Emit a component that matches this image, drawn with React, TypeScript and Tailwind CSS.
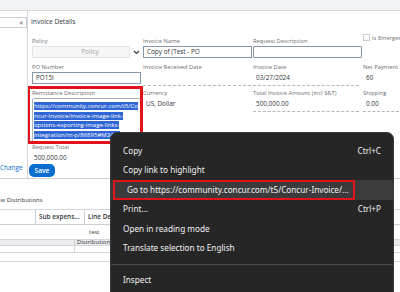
import React from "react";

const label = "text-[5.8px] leading-[8px] text-[#6a6d70] whitespace-nowrap";
const value = "text-[6.4px] text-[#32363a] whitespace-nowrap";

function Field({
  name,
  children,
}: {
  name: string;
  children?: React.ReactNode;
}) {
  return (
    <div className="flex flex-col">
      <div className={label}>{name}</div>
      {children}
    </div>
  );
}

function ReadValue({ text, dashed = true }: { text: string; dashed?: boolean }) {
  return (
    <div
      className={`mt-[1px] h-[14px] pl-[3px] pr-[3px] ${value} leading-[11px] ${
        dashed ? "border-b border-dashed border-[#b5b9bd]" : ""
      }`}
    >
      {text}
    </div>
  );
}

const menuItems: { text: string; key?: string; active?: boolean }[] = [
  { text: "Copy", key: "Ctrl+C" },
  { text: "Copy link to highlight" },
  { text: "Go to https://community.concur.com/t5/Concur-Invoice/...", active: true },
  { text: "Print...", key: "Ctrl+P" },
  { text: "Open in reading mode" },
  { text: "Translate selection to English" },
];

export default function App() {
  return (
    <div className="relative h-[292px] w-[400px] overflow-hidden bg-white font-['Open_Sans',sans-serif]">
      {/* top strip */}
      <div className="h-[11px] border-b border-[#d5d9de] bg-[#f1f3f5]" />

      <div className="flex h-[167px]">
        {/* left panel */}
        <div className="flex w-[28px] shrink-0 flex-col border-r border-[#d3d6da]">
          <div className="mt-[6px] flex h-[11px] items-center justify-end border border-l-0 border-[#c9ced4] pr-[3px] text-[7px] leading-none text-[#32363a]">
            «
          </div>
          <div className="mt-auto mb-[6px] text-[6.4px] leading-[9px] text-[#0a6ed1]">Change</div>
        </div>

        {/* main */}
        <div className="flex min-w-0 flex-1 flex-col overflow-hidden pl-[3px]">
          <div className="flex h-[22px] shrink-0 items-center text-[6.6px] text-[#32363a]">
            Invoice Details
          </div>

          <div className="grid grid-cols-[111px_110px_110px_36px] pl-[1px] pt-[4px]">
            {/* row 1 */}
            <Field name="Policy">
              <div className="mt-[1px] flex items-center">
                <div className="flex h-[12px] w-[98px] items-center justify-center border border-[#e3e5e8] bg-[#f7f7f7] pl-[18px] text-[6.6px] text-[#a3a7ab]">
                  Policy
                </div>
                <svg width="7" height="5" viewBox="0 0 7 5" className="ml-[3px]">
                  <path d="M1 1l2.5 2.5L6 1" stroke="#32363a" strokeWidth="1.1" fill="none" />
                </svg>
              </div>
            </Field>
            <Field name="Invoice Name">
              <div className={`mt-[1px] h-[12px] w-[109px] border border-[#8696a9] pl-[3px] ${value} leading-[10px]`}>
                Copy of (Test - PO
              </div>
            </Field>
            <Field name="Request Description">
              <div className="mt-[1px] h-[12px] w-[109px] rounded-[1px] border border-[#8696a9]" />
            </Field>
            <div className="-mt-[3px] flex items-start gap-[2px]">
              <div className="h-[7px] w-[7px] shrink-0 border border-[#c9ced4]" />
              <div className={label}>Is Emergency</div>
            </div>

            {/* row 2 */}
            <div className="pt-[5px]">
              <Field name="PO Number">
                <div className={`mt-[1px] h-[12px] w-[109px] border border-[#8696a9] pl-[3px] ${value} leading-[10px]`}>
                  PO15I
                </div>
              </Field>
            </div>
            <div className="pt-[5px] pr-[2px]">
              <Field name="Invoice Received Date">
                <ReadValue text="" />
              </Field>
            </div>
            <div className="pt-[5px] pr-[4px]">
              <Field name="Invoice Date">
                <ReadValue text="03/27/2024" />
              </Field>
            </div>
            <div className="pt-[5px]">
              <Field name="Net Payment Terms">
                <ReadValue text="60" dashed={false} />
              </Field>
            </div>

            {/* row 3 */}
            <div className="relative pt-[3px]">
              <div className="pointer-events-none absolute -left-[5px] top-[0px] h-[58px] w-[116px] border-[3px] border-[#e3131b]" />
              <Field name="Remittance Description">
                <div className="mt-[1px] h-[45px] w-[109px] overflow-hidden whitespace-nowrap rounded-[2px] border border-[#a9b4c0] px-[1px] pt-[3px] text-[6px] leading-[9.5px] text-white">
                  <span className="bg-[#2f66d6]">
                    https://community.concur.com/t5/Co
                    <br />
                    ncur-Invoice/invoice-image-link-
                    <br />
                    options-exporting-image-links-
                    <br />
                    integration/m-p/86895#M2420
                  </span>
                </div>
              </Field>
            </div>
            <div className="pt-[3px] pr-[2px]">
              <Field name="Currency">
                <ReadValue text="US, Dollar" dashed={false} />
              </Field>
            </div>
            <div className="pt-[3px] pr-[4px]">
              <Field name="Total Invoice Amount (incl S&T)">
                <ReadValue text="500,000.00" />
              </Field>
            </div>
            <div className="pt-[3px]">
              <Field name="Shipping">
                <ReadValue text="0.00" />
              </Field>
            </div>

            {/* row 4 */}
            <div>
              <Field name="Request Total">
                <div className={`pl-[2px] pt-[2px] ${value} leading-[9px] text-[#7a7d80]`}>500,000.00</div>
              </Field>
            </div>
          </div>

          <div className="mt-[2px] -ml-[2px] flex h-[13px] w-[26px] shrink-0 items-center justify-center rounded-[5px] bg-[#0a6ed1] text-[6.6px] font-semibold text-white">
            Save
          </div>
        </div>
      </div>

      {/* bottom section */}
      <div className="border-t border-[#cfd3d7] pt-[17px]">
        <div className="-ml-[8px] text-[6px] leading-[9px] text-[#32363a]">View Distributions</div>
        <div className="mt-[4px] border-t border-[#d3d6da] text-[6.4px] text-[#32363a]">
          <div className="flex h-[15px] border-b border-[#c9ced4]">
            <div className="w-[36px] border-r border-[#c9ced4]" />
            <div className="flex w-[49px] items-center border-r border-[#c9ced4] pl-[3px] font-semibold">
              Sub expens...
            </div>
            <div className="flex w-[25px] items-center overflow-hidden whitespace-nowrap pl-[3px] font-semibold">
              Line De
            </div>
            <div className="flex-1" />
          </div>
          <div className="flex h-[15px] items-center border-b border-[#d3d6da]">
            <div className="w-[85px]" />
            <div className="pl-[4px] text-[6px]">test</div>
          </div>
          <div className="flex h-[6px] border-b border-[#d3d6da] bg-[#e9ebed]">
            <div className="w-[75px] border-r border-[#c9ced4]" />
            <div className="-mt-[2px] w-[35px] overflow-hidden whitespace-nowrap pl-[2px] text-[6px] leading-[9px]">
              Distribution
            </div>
          </div>
          <div className="flex h-[7px] border-b border-[#d3d6da]">
            <div className="w-[75px] border-r border-[#d3d6da]" />
          </div>
          <div className="h-[9px] border-b border-[#d3d6da]" />
        </div>
      </div>

      {/* context menu */}
      <div className="absolute left-[110px] top-[132px] h-[170px] w-[284px] rounded-t-[7px] border border-[#3a3a3a] bg-[#262626] pt-[8px] font-['Noto_Sans',sans-serif] text-[8.2px] text-[#f2f2f2]">
        {menuItems.map((m) => (
          <div
            key={m.text}
            className={`flex h-[19.5px] items-center ${m.active ? "bg-[#3b3b3b]" : ""}`}
          >
            <div
              className={`flex h-full min-w-0 flex-1 items-center pl-[12px] pr-[12px] ${
                m.active ? "ml-[2px] mr-[38px] border-2 border-[#e3131b] pl-[10px]" : ""
              }`}
            >
              <span className="whitespace-nowrap">{m.text}</span>
              {m.key && <span className="ml-auto whitespace-nowrap">{m.key}</span>}
            </div>
          </div>
        ))}
        <div className="mt-[5.5px] mb-[6px] h-px bg-[#4a4a4a]" />
        <div className="flex h-[19.5px] items-center pl-[12px]">Inspect</div>
      </div>
    </div>
  );
}
